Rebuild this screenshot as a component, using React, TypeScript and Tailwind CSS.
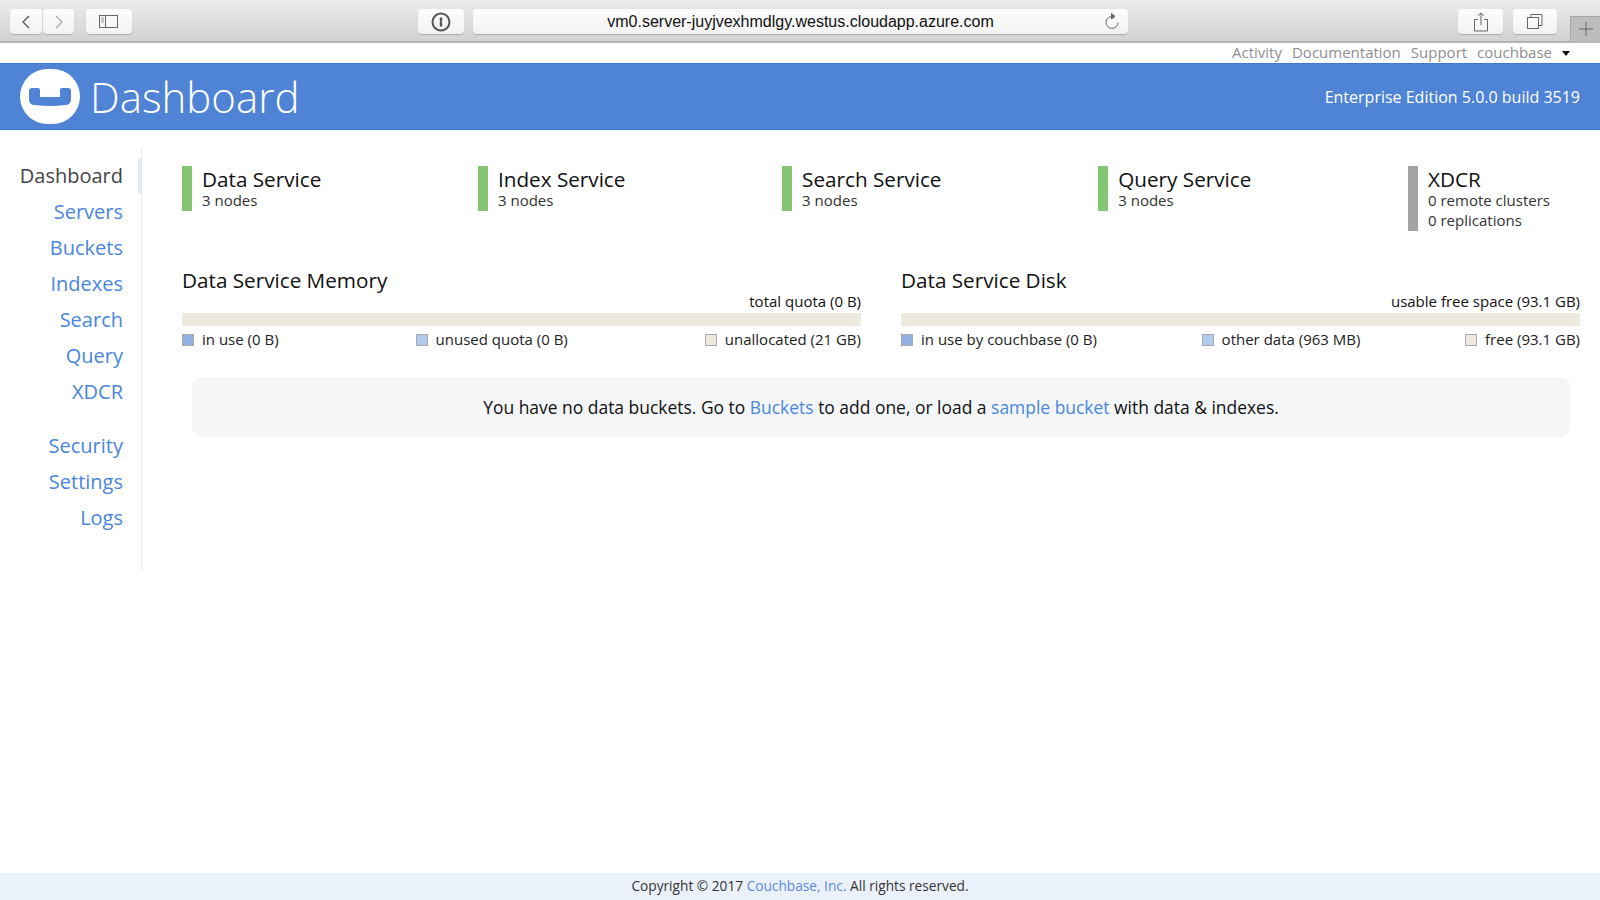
import React from 'react';

const services = [
  { name: 'Data Service', lines: ['3 nodes'], color: 'bg-[#85c674]' },
  { name: 'Index Service', lines: ['3 nodes'], color: 'bg-[#85c674]' },
  { name: 'Search Service', lines: ['3 nodes'], color: 'bg-[#85c674]' },
  { name: 'Query Service', lines: ['3 nodes'], color: 'bg-[#85c674]' },
  { name: 'XDCR', lines: ['0 remote clusters', '0 replications'], color: 'bg-[#a3a3a3]', extra: 'pr-[30px]' },
];

const navTop = ['Servers', 'Buckets', 'Indexes', 'Search', 'Query', 'XDCR'];
const navBottom = ['Security', 'Settings', 'Logs'];

const ChromeButton: React.FC<{ className: string; children: React.ReactNode }> = ({ className, children }) => (
  <div className={`h-[25px] flex items-center justify-center rounded-[4px] bg-gradient-to-b from-[#fdfdfd] to-[#f2f2f2] shadow-[0_1px_1px_rgba(0,0,0,0.2)] ${className}`}>
    {children}
  </div>
);

const BrowserBar = () => (
  <div className="h-[43px] shrink-0 flex items-start pt-[9px] bg-gradient-to-b from-[#ececec] to-[#d2d2d2] border-b-2 border-[#b5b5b5] relative">
    <ChromeButton className="w-[32px] ml-[10px]">
      <svg width="14" height="16" viewBox="0 0 14 16" fill="none" stroke="#555" strokeWidth="1.3"><path d="M10 2 L4 8 L10 14" /></svg>
    </ChromeButton>
    <ChromeButton className="w-[31px] ml-[1px]">
      <svg width="14" height="16" viewBox="0 0 14 16" fill="none" stroke="#aaa" strokeWidth="1.3"><path d="M4 2 L10 8 L4 14" /></svg>
    </ChromeButton>
    <ChromeButton className="w-[46px] ml-[12px]">
      <svg width="20" height="13" viewBox="0 0 20 13" fill="none" stroke="#666" strokeWidth="1">
        <rect x="0.5" y="0.5" width="18" height="12" />
        <path d="M6.5 0.5 V12.5" />
        <path d="M2 3 H5 M2 5 H5 M2 7 H5" stroke="#999" />
      </svg>
    </ChromeButton>
    <ChromeButton className="w-[46px] ml-[286px]">
      <svg width="20" height="20" viewBox="0 0 20 20" fill="none">
        <circle cx="10" cy="10" r="8.5" stroke="#555" strokeWidth="2" />
        <path d="M8.8 5.5 H11.2 V9 L10.4 10 L11.2 11 V14.5 H8.8 Z" fill="#555" />
      </svg>
    </ChromeButton>
    <ChromeButton className="w-[655px] ml-[9px] relative">
      <span className="text-[16px] text-[#111] font-['Liberation_Sans',sans-serif]">vm0.server-juyjvexhmdlgy.westus.cloudapp.azure.com</span>
      <svg className="absolute right-[8px] top-[4px]" width="16" height="17" viewBox="0 0 16 17" fill="none" stroke="#666" strokeWidth="1">
        <path d="M8.5 3.5 A6 6 0 1 0 14 9.5" />
        <path d="M7.5 0.5 L11 3.5 L7.5 6 Z" fill="#666" />
      </svg>
    </ChromeButton>
    <ChromeButton className="w-[45px] ml-[330px]">
      <svg width="16" height="20" viewBox="0 0 16 20" fill="none" stroke="#666" strokeWidth="1">
        <path d="M5 7.5 H1.5 V19 H14.5 V7.5 H11" />
        <path d="M8 13 V1 M4.8 4 L8 1 L11.2 4" />
      </svg>
    </ChromeButton>
    <ChromeButton className="w-[44px] ml-[10px]">
      <svg width="16" height="15" viewBox="0 0 16 15" fill="none" stroke="#666" strokeWidth="1">
        <rect x="0.5" y="3.5" width="11" height="11" />
        <path d="M4 3.5 V0.5 H15 V11.5 H11.5" />
      </svg>
    </ChromeButton>
    <div className="absolute right-0 bottom-0 w-[30px] h-[25px] bg-[#bdbdbd] border-l border-t border-[#a8a8a8] flex items-center justify-center">
      <svg width="14" height="14" viewBox="0 0 14 14" stroke="#666" strokeWidth="1"><path d="M7 0 V14 M0 7 H14" /></svg>
    </div>
  </div>
);

const LegendItem: React.FC<{ color: string; label: string }> = ({ color, label }) => (
  <div className="flex items-center gap-2">
    <span className={`w-[12px] h-[12px] mt-[2px] border border-[#a9a9a9] ${color}`}></span>
    <span>{label}</span>
  </div>
);

const UsageBlock: React.FC<{ title: string; total: string; items: { color: string; label: string }[] }> = ({ title, total, items }) => (
  <div className="flex-1">
    <h2 className="text-[20.7px] leading-[28px] font-medium text-[#111]">{title}</h2>
    <div className="text-[15px] leading-[20px] text-right text-[#111] -mt-[3px]">{total}</div>
    <div className="h-[13px] mt-[2px] bg-[#eeeae0]"></div>
    <div className="flex justify-between mt-[3px] text-[15px] leading-[20px] text-[#222]">
      {items.map((item) => (
        <LegendItem key={item.label} color={item.color} label={item.label} />
      ))}
    </div>
  </div>
);

export default function App() {
  return (
    <div className="h-screen flex flex-col bg-white font-['Open_Sans',sans-serif] overflow-hidden">
      <BrowserBar />

      <div className="h-[20px] shrink-0 flex justify-end items-center gap-[10px] pr-[30px] text-[15px] leading-[18px] text-[#8e8e8e]">
        <span className="-mt-[2px]">Activity</span>
        <span className="-mt-[2px]">Documentation</span>
        <span className="-mt-[2px]">Support</span>
        <span className="-mt-[2px]">couchbase</span>
        <span className="w-0 h-0 border-x-[4.5px] border-x-transparent border-t-[5px] border-t-[#111]"></span>
      </div>

      <header className="h-[67px] shrink-0 flex items-center justify-between pl-[20px] pr-[20px] bg-[#4f83d6] border-y border-[#3f78d2]">
        <div className="flex items-center">
          <div className="w-[60px] h-[55px] rounded-full bg-white flex items-center justify-center">
            <svg width="42" height="18" viewBox="0 0 42 18" fill="#4f83d6">
              <path d="M3 0 H9 Q11 0 11 2 V9 H31 V2 Q31 0 33 0 H39 Q42 0 42 3 V11 Q42 17 36 17 Q21 19 6 17 Q0 17 0 11 V3 Q0 0 3 0 Z" />
            </svg>
          </div>
          <h1 className="ml-[10px] text-[42px] leading-[55px] font-light text-white">Dashboard</h1>
        </div>
        <div className="text-[16px] font-medium text-white">Enterprise Edition 5.0.0 build 3519</div>
      </header>

      <div className="flex-1 flex items-start">
        <nav className="w-[142px] h-[423px] mt-[18px] pt-[10px] shrink-0 border-r border-[#e8e8e8] text-right text-[20px] text-[#4a86dd]">
          <div className="h-[36px] leading-[36px] pr-[15px] border-r-[3px] border-[#e3ebf7] text-[#444]">Dashboard</div>
          {navTop.map((item) => (
            <div key={item} className="h-[36px] leading-[36px] pr-[18px]">{item}</div>
          ))}
          <div className="h-[18px]"></div>
          {navBottom.map((item) => (
            <div key={item} className="h-[36px] leading-[36px] pr-[18px]">{item}</div>
          ))}
        </nav>

        <main className="flex-1 pl-[40px] pr-[20px] pt-[36px]">
          <div className="flex justify-between items-start">
            {services.map((service) => (
              <div key={service.name} className={`flex ${service.extra || ''}`}>
                <div className={`w-[10px] ${service.color}`}></div>
                <div className="ml-[10px] pb-px">
                  <div className="mt-[2px] text-[20.7px] leading-[22px] font-medium text-[#111]">{service.name}</div>
                  {service.lines.map((line) => (
                    <div key={line} className="text-[15px] leading-[20px] text-[#333]">{line}</div>
                  ))}
                </div>
              </div>
            ))}
          </div>

          <div className="flex gap-[40px] mt-[35px]">
            <UsageBlock
              title="Data Service Memory"
              total="total quota (0 B)"
              items={[
                { color: 'bg-[#8fb2e3]', label: 'in use (0 B)' },
                { color: 'bg-[#b1cbee]', label: 'unused quota (0 B)' },
                { color: 'bg-[#eeeae0]', label: 'unallocated (21 GB)' },
              ]}
            />
            <UsageBlock
              title="Data Service Disk"
              total="usable free space (93.1 GB)"
              items={[
                { color: 'bg-[#8fb2e3]', label: 'in use by couchbase (0 B)' },
                { color: 'bg-[#b1cbee]', label: 'other data (963 MB)' },
                { color: 'bg-[#eeeae0]', label: 'free (93.1 GB)' },
              ]}
            />
          </div>

          <div className="mx-[10px] mt-[28px] h-[60px] flex items-center justify-center rounded-[10px] bg-[#f5f6f8] text-[17.45px] text-[#111]">
            <p>
              You have no data buckets. Go to <span className="text-[#4a86dd]">Buckets</span> to add one, or load a{' '}
              <span className="text-[#4a86dd]">sample bucket</span> with data &amp; indexes.
            </p>
          </div>
        </main>
      </div>

      <footer className="h-[27px] shrink-0 flex items-center justify-center bg-[#ebf1fa] text-[13.7px] text-[#333]">
        <p>
          Copyright © 2017 <span className="text-[#5b8bd9]">Couchbase, Inc.</span> All rights reserved.
        </p>
      </footer>
    </div>
  );
}
